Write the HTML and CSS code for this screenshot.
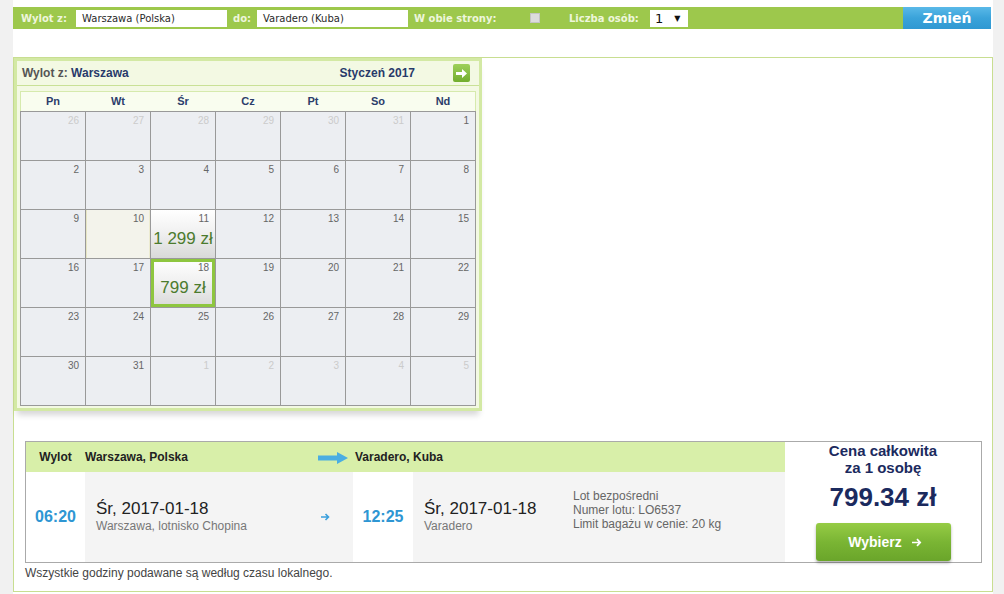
FILE: index.html
```html
<!DOCTYPE html>
<html lang="pl">
<head>
  <meta charset="UTF-8">
  <title>Kalendarz lotów</title>
  <link rel="stylesheet" href="styles.css">
</head>
<body>
  <div class="page">
    <!-- Search bar -->
    <div class="searchbar">
      <span class="sb-label sb-from-label">Wylot z:</span>
      <span class="sb-input">Warszawa (Polska)</span>
      <span class="sb-label sb-to-label">do:</span>
      <span class="sb-input">Varadero (Kuba)</span>
      <span class="sb-label sb-both-label">W obie strony:</span>
      <span class="sb-check"></span>
      <span class="sb-label sb-pax-label">Liczba osób:</span>
      <span class="sb-select"><span class="sb-val">1</span><span class="sb-caret">&#9660;</span></span>
      <button class="sb-submit">Zmień</button>
    </div>

    <div class="frame">
      <!-- Calendar -->
      <div class="calendar">
        <div class="cal-head">
          <span class="cal-title"><span class="cal-muted">Wylot z:</span> Warszawa</span>
          <span class="cal-month">Styczeń 2017</span>
          <span class="cal-next">
            <svg width="11" height="9" viewBox="0 0 11 9"><path d="M0 3h6V0l5 4.5L6 9V6H0z" fill="#fff"/></svg>
          </span>
        </div>
        <div class="cal-body">
          <div class="cal-days">
            <span>Pn</span><span>Wt</span><span>Śr</span><span>Cz</span><span>Pt</span><span>So</span><span>Nd</span>
          </div>
          <div class="cal-grid">
            <div class="day other">26</div>
            <div class="day other">27</div>
            <div class="day other">28</div>
            <div class="day other">29</div>
            <div class="day other">30</div>
            <div class="day other">31</div>
            <div class="day">1</div>

            <div class="day">2</div>
            <div class="day">3</div>
            <div class="day">4</div>
            <div class="day">5</div>
            <div class="day">6</div>
            <div class="day">7</div>
            <div class="day">8</div>

            <div class="day">9</div>
            <div class="day hover">10</div>
            <div class="day has-price">11<span class="price">1 299 zł</span></div>
            <div class="day">12</div>
            <div class="day">13</div>
            <div class="day">14</div>
            <div class="day">15</div>

            <div class="day">16</div>
            <div class="day">17</div>
            <div class="day has-price selected">18<span class="price">799 zł</span></div>
            <div class="day">19</div>
            <div class="day">20</div>
            <div class="day">21</div>
            <div class="day">22</div>

            <div class="day">23</div>
            <div class="day">24</div>
            <div class="day">25</div>
            <div class="day">26</div>
            <div class="day">27</div>
            <div class="day">28</div>
            <div class="day">29</div>

            <div class="day">30</div>
            <div class="day">31</div>
            <div class="day other">1</div>
            <div class="day other">2</div>
            <div class="day other">3</div>
            <div class="day other">4</div>
            <div class="day other">5</div>
          </div>
        </div>
      </div>

      <!-- Selected flight -->
      <div class="flight">
        <div class="flight-main">
          <div class="fh fh-label">Wylot</div>
          <div class="fh">Warszawa, Polska</div>
          <div class="fh fh-arrow">
            <svg width="30" height="12" viewBox="0 0 30 12"><path d="M0 3.5h19V0l11 6-11 6V8.5H0z" fill="#4aaee2"/></svg>
          </div>
          <div class="fh fh-wide">Varadero, Kuba</div>

          <div class="fb time">06:20</div>
          <div class="fb place">
            <div class="date">Śr, 2017-01-18</div>
            <div class="airport">Warszawa, lotnisko Chopina</div>
          </div>
          <div class="fb go">
            <svg width="9" height="8" viewBox="0 0 9 8"><path d="M0 4h7.5M4.5 1l3 3-3 3" stroke="#3a9fdc" stroke-width="1.6" fill="none"/></svg>
          </div>
          <div class="fb time">12:25</div>
          <div class="fb place">
            <div class="date">Śr, 2017-01-18</div>
            <div class="airport">Varadero</div>
          </div>
          <div class="fb details">
            <div>Lot bezpośredni</div>
            <div>Numer lotu: LO6537</div>
            <div>Limit bagażu w cenie: 20 kg</div>
          </div>
        </div>
        <div class="flight-price">
          <div class="price-label">Cena całkowita<br>za 1 osobę</div>
          <div class="price-total">799.34 zł</div>
          <button class="choose">Wybierz
            <svg width="10" height="9" viewBox="0 0 10 9"><path d="M0 4.5h8M5 1.2l3.2 3.3L5 7.8" stroke="#fff" stroke-width="1.7" fill="none"/></svg>
          </button>
        </div>
      </div>

      <p class="note">Wszystkie godziny podawane są według czasu lokalnego.</p>
    </div>
  </div>
</body>
</html>
```

FILE: styles.css
```css
body {
  margin: 0;
  background: #f1f1f1;
  font-family: "Liberation Sans", Arial, sans-serif;
}
.page {
  width: 980px;
  min-height: 594px;
  margin-left: 13px;
  padding-top: 7px;
  box-sizing: border-box;
  background: #fff;
}

/* search bar */
.searchbar {
  display: flex;
  align-items: center;
  width: 978px;
  height: 22px;
  background: #9dc84c;
  font-family: "DejaVu Sans", Verdana, sans-serif;
  font-size: 10px;
}
.sb-label {
  color: #eef6dc;
  font-weight: bold;
  box-sizing: border-box;
}
.sb-from-label {
  width: 63px;
  padding-left: 8px;
}
.sb-to-label {
  width: 30px;
  padding-left: 6px;
}
.sb-both-label {
  width: 122px;
  padding-left: 6px;
}
.sb-pax-label {
  width: 110px;
  padding-left: 29px;
}
.sb-input {
  width: 151px;
  height: 17px;
  padding-left: 6px;
  box-sizing: border-box;
  background: #fff;
  color: #2a2a2a;
  line-height: 17px;
}
.sb-check {
  width: 10px;
  height: 10px;
  box-sizing: border-box;
  border: 1px solid #c4c4c4;
  background: #dcdcdc;
}
.sb-select {
  display: flex;
  align-items: center;
  width: 38px;
  height: 17px;
  background: #fff;
  color: #111;
}
.sb-val {
  margin-left: 5px;
  font-size: 13px;
}
.sb-caret {
  margin-left: 11px;
  font-size: 8px;
}
.sb-submit {
  margin-left: auto;
  width: 88px;
  height: 22px;
  border: none;
  padding: 0;
  background: linear-gradient(#5ab9e8, #3aa3da 50%, #2f98d2);
  color: #fff;
  font-family: "DejaVu Sans", Verdana, sans-serif;
  font-size: 14px;
  font-weight: bold;
}

/* main frame */
.frame {
  width: 980px;
  margin-top: 28px;
  padding-bottom: 11px;
  box-sizing: border-box;
  border: 1px solid #c8de91;
}

/* calendar */
.calendar {
  width: 468px;
  box-sizing: border-box;
  border: 3px solid #d3e9a4;
  background: #f3f9e3;
  box-shadow: 0 7px 6px -3px rgba(0, 0, 0, 0.16);
}
.cal-head {
  display: flex;
  align-items: center;
  height: 24px;
  padding-left: 5px;
  border-bottom: 1px solid #c9e196;
  font-weight: bold;
}
.cal-title {
  font-size: 12px;
  color: #283a6a;
}
.cal-muted {
  color: #555;
}
.cal-month {
  margin-left: auto;
  font-size: 12px;
  color: #283a6a;
}
.cal-next {
  display: flex;
  align-items: center;
  justify-content: center;
  width: 17px;
  height: 18px;
  margin: 0 9px 0 38px;
  border-radius: 2px;
  background: linear-gradient(#9ed05a, #72ad2e);
}
.cal-body {
  padding: 5px 3px 2px 3px;
}
.cal-days {
  display: grid;
  grid-template-columns: repeat(7, 64px);
  column-gap: 1px;
  height: 19px;
  border: 1px solid #d6eaad;
  border-bottom: none;
  background: #f9fdef;
  font-size: 11px;
  font-weight: bold;
  color: #2c3d6b;
  line-height: 19px;
  text-align: center;
}
.cal-grid {
  display: grid;
  grid-template-columns: repeat(7, 64px);
  grid-auto-rows: 48px;
  gap: 1px;
  width: fit-content;
  border: 1px solid #999;
  background: #999;
}
.day {
  padding: 3px 6px 0 0;
  background: #eceef2;
  font-size: 10px;
  line-height: 12px;
  color: #666;
  text-align: right;
}
.day.other {
  color: #cbcbcb;
}
.day.hover {
  background: #f3f3eb;
  box-shadow: inset 1px 0 0 #e6e5c3, inset -1px 0 0 #ecebd0;
}
.day.has-price {
  background: linear-gradient(#fff, #f1f1f1 45%, #d9d9d9);
}
.day.selected {
  box-shadow: inset 0 0 0 3px #8ec63f;
}
.price {
  display: block;
  margin: 4px -6px 0 0;
  font-size: 17px;
  line-height: 20px;
  color: #4c7b2e;
  text-align: center;
}

/* flight */
.flight {
  display: flex;
  width: 957px;
  height: 122px;
  margin: 30px 0 0 11px;
  box-sizing: border-box;
  border: 1px solid #aaa;
}
.flight-main {
  flex: 1;
  display: grid;
  grid-template-columns: 59px 233px 35px 60px 150px 1fr;
  grid-template-rows: 30px 1fr;
}
.fh {
  display: flex;
  align-items: center;
  background: #d8efa9;
  font-size: 12px;
  font-weight: bold;
  color: #222;
}
.fh-label {
  justify-content: center;
}
.fh-arrow {
  padding-top: 1px;
}
.fh-wide {
  grid-column: span 3;
  padding-left: 2px;
}
.fb {
  display: flex;
  flex-direction: column;
  justify-content: center;
  background: #f4f4f4;
}
.time {
  align-items: center;
  background: #fff;
  font-size: 16px;
  font-weight: bold;
  color: #2e96d3;
}
.place {
  padding: 0 0 3px 11px;
}
.date {
  font-size: 17px;
  color: #222;
}
.airport {
  font-size: 12px;
  color: #777;
}
.go {
  padding: 0 0 0 3px;
}
.details {
  justify-content: flex-start;
  padding: 17px 0 0 10px;
  font-size: 12px;
  line-height: 14px;
  color: #666;
}
.flight-price {
  display: flex;
  flex-direction: column;
  align-items: center;
  width: 196px;
  background: #fff;
  color: #1b2a5e;
  font-weight: bold;
}
.price-label {
  font-size: 15px;
  line-height: 17px;
  text-align: center;
}
.price-total {
  margin-top: 6px;
  font-size: 26px;
  line-height: 30px;
}
.choose {
  display: flex;
  align-items: center;
  justify-content: center;
  gap: 10px;
  width: 135px;
  height: 38px;
  margin-top: 11px;
  padding: 0 0 0 4px;
  border: none;
  border-radius: 3px;
  background: linear-gradient(#96cc45, #7ab534 50%, #6aa52a);
  box-shadow: 0 2px 3px rgba(0, 0, 0, 0.3);
  color: #fff;
  font-family: "Liberation Sans", Arial, sans-serif;
  font-size: 14px;
  font-weight: bold;
}
.note {
  margin: 3px 0 0 11px;
  font-size: 12px;
  line-height: 14px;
  color: #444;
}
```
